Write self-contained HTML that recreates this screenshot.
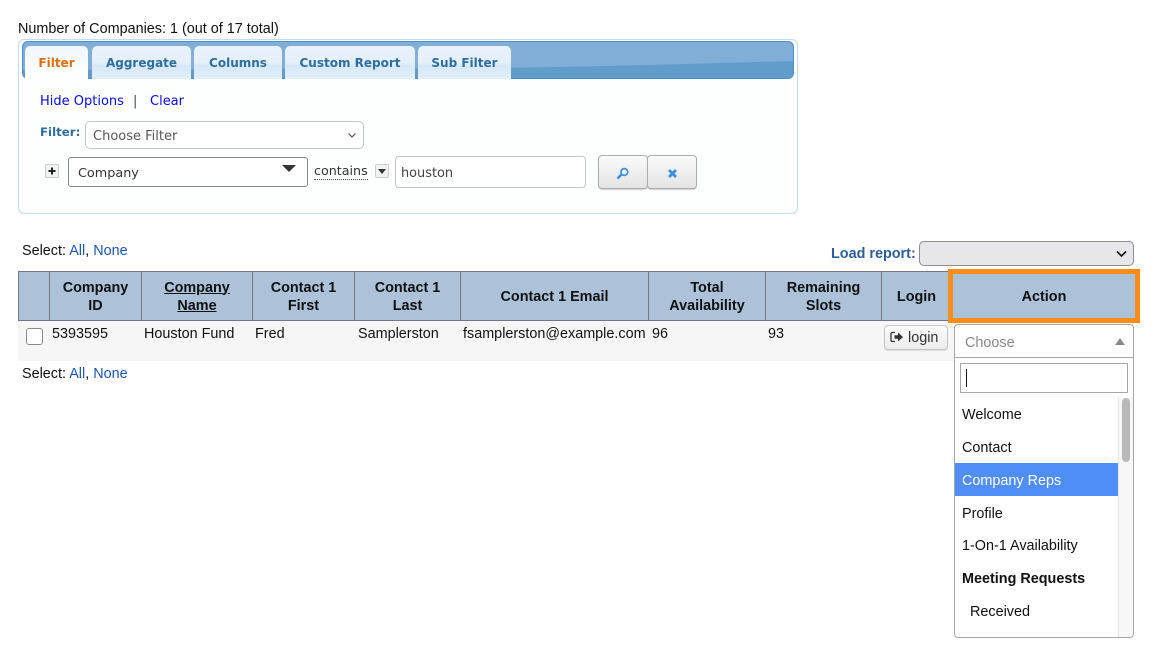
<!DOCTYPE html>
<html><head><meta charset="utf-8">
<style>
html,body{margin:0;padding:0;background:#fff;width:1151px;height:652px;overflow:hidden}
body{font-family:"Liberation Sans",sans-serif;font-size:14.4px;color:#111;position:relative}
.a{position:absolute;white-space:nowrap;line-height:18px}
.d{font-family:"DejaVu Sans",sans-serif;font-size:13px}
.tab{position:absolute;top:46px;height:33px;border-radius:5px 5px 0 0;background:linear-gradient(#e8f2fc 0,#e4f0fb 50%,#d6e8f8 60%,#e2effb 100%);text-align:center;font:bold 12px/35px "DejaVu Sans",sans-serif;color:#2e6e9e;box-sizing:border-box}
.th{position:absolute;top:271px;height:49px;padding-top:2px;background:#abc2d8;border-left:1px solid #757589;box-sizing:border-box;text-align:center;font-weight:bold;line-height:18px;display:flex;align-items:center;justify-content:center;color:#111}
.li{position:absolute;left:962px;white-space:nowrap;line-height:18px}
a{color:#1f55ad;text-decoration:none}
</style></head><body>
<div class="a" style="left:18px;top:20px">Number of Companies: 1 (out of 17 total)</div>

<div style="position:absolute;left:18px;top:39px;width:778px;height:173px;border:1px solid #c5dbec;border-radius:6px;background:#fdfefe"></div>
<div style="position:absolute;left:22px;top:41px;width:772px;height:38px;box-sizing:border-box;border:1px solid #4a90cc;border-radius:6px;overflow:hidden;background:#80aed6">
<svg width="772" height="38" style="position:absolute;left:0;top:0"><path d="M0 28 L480 26 C600 24 700 21 772 19 V38 H0Z" fill="#629ccb"/></svg>
</div>
<div class="tab" style="left:25px;width:63px;background:linear-gradient(#eef6fd,#fdfefe 70%);color:#e36c0a;height:34px">Filter</div>
<div class="tab" style="left:92px;width:99px">Aggregate</div>
<div class="tab" style="left:194px;width:88px">Columns</div>
<div class="tab" style="left:285px;width:130px">Custom Report</div>
<div class="tab" style="left:418px;width:93px">Sub Filter</div>

<div class="a d" style="left:40px;top:93px;color:#0a0adf">Hide Options</div>
<div class="a d" style="left:133px;top:93px;color:#444">|</div>
<div class="a d" style="left:150px;top:93px;color:#0a0adf">Clear</div>
<div class="a d" style="left:40px;top:123px;color:#2e6e9e;font-weight:bold;font-size:11.8px">Filter:</div>
<div style="position:absolute;left:85px;top:121px;width:279px;height:28px;box-sizing:border-box;border:1px solid #c4c4c4;border-radius:5px;background:#fff"></div>
<div class="a d" style="left:93px;top:128px;color:#555">Choose Filter</div>
<svg style="position:absolute;left:347px;top:132px" width="10" height="7"><path d="M1.5 1.5L5 5L8.5 1.5" fill="none" stroke="#555" stroke-width="1.2"/></svg>

<div style="position:absolute;left:45px;top:164px;width:14px;height:14px;box-sizing:border-box;border:1px solid #ccc;border-radius:2px;background:#f2f2f2"></div>
<svg style="position:absolute;left:45px;top:164px" width="14" height="14"><path d="M7 3.5V10.5M3.5 7H10.5" stroke="#222" stroke-width="2"/></svg>
<div style="position:absolute;left:68px;top:157px;width:240px;height:30px;box-sizing:border-box;border:1px solid #8a8a8a;border-radius:3px;background:#fff"></div>
<div class="a d" style="left:78px;top:165px;color:#333;font-size:12.8px">Company</div>
<svg style="position:absolute;left:282px;top:165px" width="14" height="8"><path d="M0 0H14L7 7Z" fill="#333"/></svg>
<div class="a d" style="left:314px;top:162px;color:#333;line-height:17px;font-size:12.7px;border-bottom:1px dotted #555">contains</div>
<div style="position:absolute;left:375px;top:164px;width:14px;height:14px;box-sizing:border-box;border:1px solid #ccc;border-radius:2px;background:#f2f2f2"></div>
<svg style="position:absolute;left:378px;top:169px" width="8" height="5"><path d="M0 0H8L4 5Z" fill="#333"/></svg>
<div style="position:absolute;left:395px;top:156px;width:191px;height:32px;box-sizing:border-box;border:1px solid #c4c4c4;border-radius:4px;background:#fff"></div>
<div class="a d" style="left:401px;top:165px;color:#444;font-size:12.9px">houston</div>

<div style="position:absolute;left:598px;top:155px;width:50px;height:34px;box-sizing:border-box;border:1px solid #adadad;border-radius:4px;background:linear-gradient(#fafafa,#e4e4e4);box-shadow:0 1px 1px #ccc"></div>
<div style="position:absolute;left:647px;top:155px;width:50px;height:34px;box-sizing:border-box;border:1px solid #adadad;border-radius:4px;background:linear-gradient(#fafafa,#e4e4e4);box-shadow:0 1px 1px #ccc"></div>
<svg style="position:absolute;left:616px;top:167px" width="14" height="13"><circle cx="8.3" cy="5" r="3.4" fill="none" stroke="#3d8fdc" stroke-width="1.7"/><path d="M5.5 7.5L1.5 11.5" stroke="#3d8fdc" stroke-width="2.6"/></svg>
<svg style="position:absolute;left:667px;top:168px" width="11" height="11"><path d="M2 2L9 9M9 2L2 9" stroke="#3d8fdc" stroke-width="2.8"/></svg>

<div class="a" style="left:22px;top:242px">Select: <a>All</a>, <a>None</a></div>
<div class="a" style="left:831px;top:245px;font-weight:bold;color:#2e5f94">Load report:</div>
<div style="position:absolute;left:919px;top:241px;width:215px;height:25px;box-sizing:border-box;border:1px solid #8d8d8d;border-radius:5px;background:#e6e6eb"></div>
<svg style="position:absolute;left:1116px;top:250px" width="11" height="8"><path d="M1 1.5L5.5 6L10 1.5" fill="none" stroke="#111" stroke-width="1.6"/></svg>

<div class="th" style="left:18px;width:31px"></div>
<div class="th" style="left:49px;width:92px">Company<br>ID</div>
<div class="th" style="left:141px;width:111px;text-decoration:underline">Company<br>Name</div>
<div class="th" style="left:252px;width:102px">Contact 1<br>First</div>
<div class="th" style="left:354px;width:106px">Contact 1<br>Last</div>
<div class="th" style="left:460px;width:188px">Contact 1 Email</div>
<div class="th" style="left:648px;width:117px">Total<br>Availability</div>
<div class="th" style="left:765px;width:116px">Remaining<br>Slots</div>
<div class="th" style="left:881px;width:70px">Login</div>
<div style="position:absolute;left:18px;top:271px;width:930px;height:1px;background:#757589"></div>
<div style="position:absolute;left:18px;top:320px;width:930px;height:1px;background:#757589"></div>
<div class="th" style="left:948px;width:192px;top:269px;height:54px;border:5px solid #fa8c1a;box-shadow:none">Action</div>

<div style="position:absolute;left:18px;top:321px;width:1116px;height:40px;background:#f6f6f6"></div>
<div style="position:absolute;left:948px;top:321px;width:192px;height:2px;background:#fa8c1a"></div>
<div style="position:absolute;left:26px;top:328px;width:17px;height:17px;box-sizing:border-box;border:1px solid #8a8a8a;border-radius:3px;background:#fff"></div>
<div class="a" style="left:52px;top:325px">5393595</div>
<div class="a" style="left:144px;top:325px">Houston Fund</div>
<div class="a" style="left:255px;top:325px">Fred</div>
<div class="a" style="left:358px;top:325px">Samplerston</div>
<div class="a" style="left:463px;top:325px">fsamplerston@example.com</div>
<div class="a" style="left:652px;top:325px">96</div>
<div class="a" style="left:768px;top:325px">93</div>
<div style="position:absolute;left:884px;top:325px;width:64px;height:25px;box-sizing:border-box;border:1px solid #c4c4c4;border-radius:4px;background:linear-gradient(#fbfbfb,#ececec);box-shadow:0 1px 1px #ddd"></div>
<svg style="position:absolute;left:890px;top:331px" width="15" height="13"><path d="M5 1.5H2.5Q1 1.5 1 3V9Q1 10.5 2.5 10.5H5" fill="none" stroke="#333" stroke-width="1.3"/><path d="M4.5 4.3H8V1.5L13 6L8 10.5V7.7H4.5Z" fill="#333"/></svg>
<div class="a" style="left:908px;top:329px;color:#333">login</div>

<div class="a" style="left:22px;top:365px">Select: <a>All</a>, <a>None</a></div>

<div style="position:absolute;left:954px;top:324px;width:180px;height:314px;box-sizing:border-box;border:1px solid #a6a6a6;border-radius:4px;background:#fff"></div>
<div style="position:absolute;left:955px;top:357px;width:178px;height:1px;background:#a6a6a6"></div>
<div class="a" style="left:965px;top:334px;color:#888">Choose</div>
<svg style="position:absolute;left:1115px;top:338px" width="10" height="7"><path d="M0 7L5 0L10 7Z" fill="#888"/></svg>
<div style="position:absolute;left:960px;top:363px;width:168px;height:30px;box-sizing:border-box;border:1px solid #a6a6a6;background:#fff"></div>
<div style="position:absolute;left:966px;top:369px;width:1px;height:18px;background:#111"></div>

<div style="position:absolute;left:1118px;top:397px;width:15px;height:240px;background:#f7f7f7;border-left:1px solid #e8e8e8;box-sizing:border-box;border-radius:0 0 4px 0"></div>
<div style="position:absolute;left:1122px;top:398px;width:8px;height:64px;border-radius:4px;background:#b9b9b9"></div>
<div style="position:absolute;left:955px;top:463px;width:163px;height:33px;background:#4f8ef7"></div>
<div class="li" style="top:406px">Welcome</div>
<div class="li" style="top:439px">Contact</div>
<div class="li" style="top:472px;color:#fff">Company Reps</div>
<div class="li" style="top:505px">Profile</div>
<div class="li" style="top:537px">1-On-1 Availability</div>
<div class="li" style="top:570px;font-weight:bold">Meeting Requests</div>
<div class="li" style="top:603px;left:970px">Received</div>
</body></html>
